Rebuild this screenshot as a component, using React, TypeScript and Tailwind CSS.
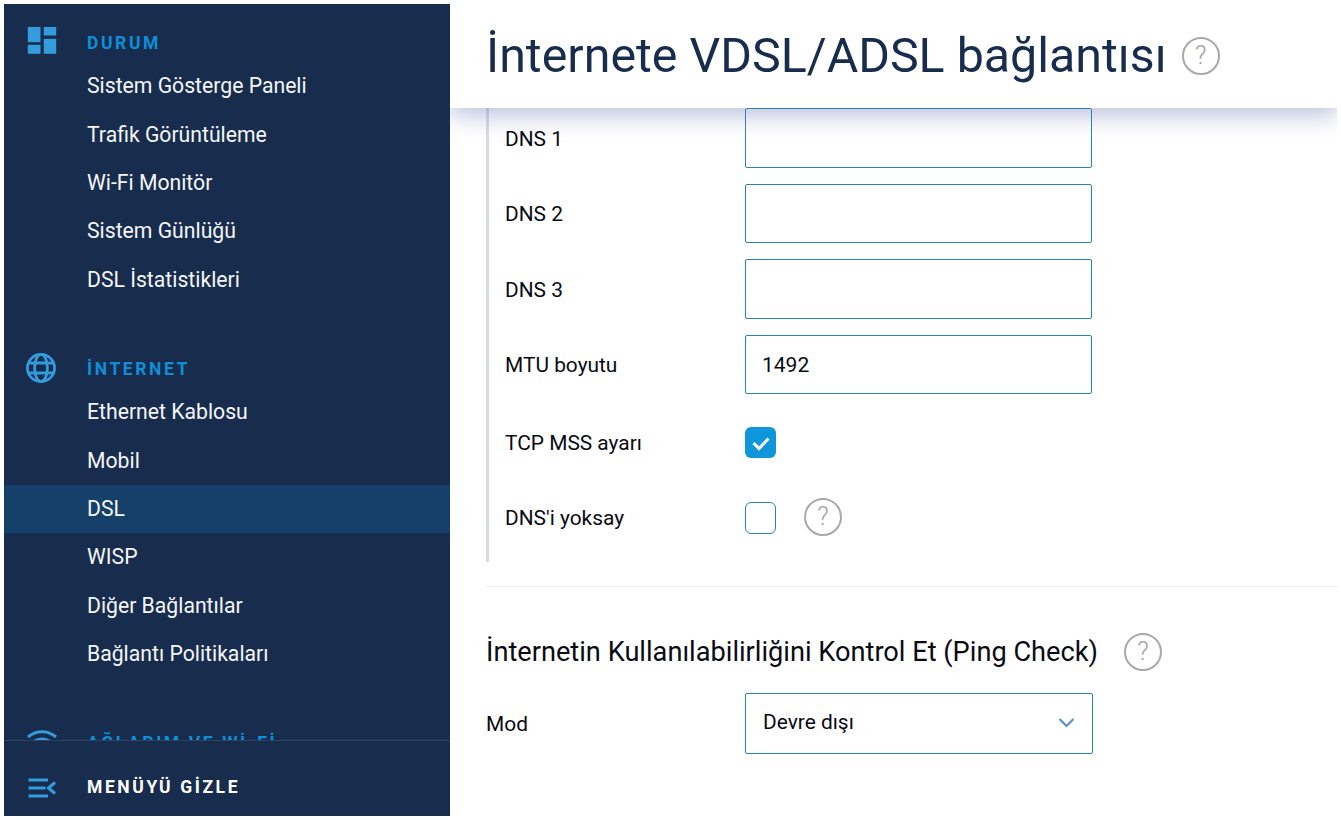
import React from "react";

const sections = [
  { title: "DURUM", icon: "dash", items: ["Sistem Gösterge Paneli", "Trafik Görüntüleme", "Wi-Fi Monitör", "Sistem Günlüğü", "DSL İstatistikleri"] },
  { title: "İNTERNET", icon: "globe", items: ["Ethernet Kablosu", "Mobil", "DSL", "WISP", "Diğer Bağlantılar", "Bağlantı Politikaları"] },
  { title: "AĞLARIM VE Wİ-Fİ", icon: "wifi", items: [] as string[] },
];

function Icon({ name }: { name: string }) {
  if (name === "dash")
    return (
      <svg className="-translate-y-[1.200px]" width="30" height="30" viewBox="0 0 30 30" fill="#349bdc">
        <rect x="0.8" y="0" width="12.7" height="15.400" />
        <rect x="16.8" y="0" width="12.4" height="8.700" />
        <rect x="0.8" y="18" width="12.7" height="9" />
        <rect x="16.8" y="12" width="12.4" height="15" />
      </svg>
    );
  if (name === "globe")
    return (
      <svg className="-translate-x-[1px] -translate-y-[1px]" width="32" height="32" viewBox="0 0 32 32" fill="none" stroke="#349bdc" strokeWidth="2.8">
        <circle cx="16" cy="16" r="13.6" />
        <ellipse cx="16" cy="16" rx="6.4" ry="13.6" />
        <path d="M3.5 11h25M3.5 21h25" />
      </svg>
    );
  return (
    <svg width="32" height="32" viewBox="0 0 32 32" fill="none" stroke="#349bdc" strokeWidth="3">
      <path d="M2 10c8-7 20-7 28 0M7 15c5-4 13-4 18 0M12 20c2-1.500 6-1.500 8 0" />
    </svg>
  );
}

function Help({ className = "" }: { className?: string }) {
  return (
    <span className={"flex h-[38px] w-[38px] shrink-0 items-center justify-center rounded-full border-2 border-[#a9a9a9] text-[25px] font-light text-[#a0a0a0] " + className}>
      ?
    </span>
  );
}

function Field({ label, value = "" }: { label: string; value?: string }) {
  return (
    <div className="flex items-center">
      <div className="w-[240px] shrink-0 pt-[3px] text-[20.900px] text-[#0a0a14]">{label}</div>
      <div className="flex h-[59.500px] w-[347px] items-center rounded-[2px] border border-[#2488ad] pl-[16px] pt-[2px] text-[21px] text-[#0a0a14]">
        {value}
      </div>
    </div>
  );
}

export default function App() {
  return (
    <div className="flex h-[820px] w-[1341px] overflow-hidden bg-white p-1 font-['Roboto',sans-serif]">
      <aside className="flex w-[446px] shrink-0 flex-col bg-[#182c4e]">
        <nav className="min-h-0 flex-1 overflow-hidden pt-[27px]">
          {sections.map((s) => (
            <section key={s.title} className="mb-[53px]">
              <div className="flex h-[24px] items-center">
                <div className="flex w-[83px] pl-[21.500px]">
                  <span className="flex h-[24px] w-[32px] items-center justify-center">
                    <Icon name={s.icon} />
                  </span>
                </div>
                <h2 className="text-[17.500px] font-bold tracking-[2.600px] text-[#0f8fd8]">{s.title}</h2>
              </div>
              <ul className="mt-[7px]">
                {s.items.map((item) => (
                  <li
                    key={item}
                    className={
                      "flex h-[48.400px] items-center pl-[83px] text-[21.200px] text-[#f4f6f8] " +
                      (item === "DSL" ? "bg-[#14406a]" : "")
                    }
                  >
                    {item}
                  </li>
                ))}
              </ul>
            </section>
          ))}
        </nav>
        <footer className="flex h-[76px] shrink-0 items-center border-t border-[#2e4264] bg-[#182c4e] pt-[18px]">
          <div className="flex w-[83px] pl-[23.500px]">
            <svg width="28" height="20" viewBox="0 0 28 20" fill="none" stroke="#349bdc" strokeWidth="3">
              <path d="M0.500 2h19.500M0.500 10h17M0.500 18h19.500M27 4.500l-6.500 5.500 6.500 5.500" />
            </svg>
          </div>
          <span className="text-[17.500px] font-bold tracking-[2.600px] text-white">MENÜYÜ GİZLE</span>
        </footer>
      </aside>

      <main className="flex min-w-0 flex-1 flex-col overflow-hidden">
        <header className="relative z-10 flex h-[104px] shrink-0 items-center bg-white pl-[36px] shadow-[0_6px_24px_rgba(90,105,170,0.45)]">
          <h1 className="text-[48.350px] font-normal leading-none text-[#182c4e]">İnternete VDSL/ADSL bağlantısı</h1>
          <Help className="ml-[15px]" />
        </header>

        <div className="pl-[36px]">
          <div className="flex h-[454px] flex-col border-l-[3px] border-[#d6dbe7] pl-4">
            <div className="flex flex-col gap-[16px]">
              <Field label="DNS 1" />
              <Field label="DNS 2" />
              <Field label="DNS 3" />
              <Field label="MTU boyutu" value="1492" />
            </div>
            <div className="mt-[33px] flex h-[31px] items-center">
              <div className="w-[240px] shrink-0 pt-[2px] text-[20.900px] text-[#0a0a14]">TCP MSS ayarı</div>
              <span className="flex h-[31px] w-[31px] items-center justify-center rounded-[6px] bg-[#0f96da]">
                <svg width="20" height="16" viewBox="0 0 20 16" fill="none" stroke="#fff" strokeWidth="3">
                  <path d="M2.500 8l5.500 5.500 9.500-10" />
                </svg>
              </span>
            </div>
            <div className="mt-[44px] flex h-[31px] items-center">
              <div className="w-[240px] shrink-0 pt-[2px] text-[20.900px] text-[#0a0a14]">DNS'i yoksay</div>
              <span className="h-[32px] w-[31px] rounded-[6px] border border-[#2488ad]" />
              <Help className="ml-[28px] -translate-y-[1px]" />
            </div>
          </div>

          <div className="mt-[24px] h-px bg-[#ececec]" />

          <div className="mt-[46px] flex items-center">
            <h3 className="pt-[2px] text-[27.200px] font-normal leading-none text-[#0a0a14]">
              İnternetin Kullanılabilirliğini Kontrol Et (Ping Check)
            </h3>
            <Help className="ml-[26px]" />
          </div>

          <div className="mt-[22px] flex items-center">
            <div className="w-[259px] shrink-0 pt-[2px] text-[20.900px] text-[#0a0a14]">Mod</div>
            <div className="flex h-[61px] w-[348px] items-center justify-between rounded-[2px] border border-[#2488ad] pb-[2px] pl-[17px] pr-[17px] text-[20.900px] text-[#0a0a14]">
              <span>Devre dışı</span>
              <svg width="17" height="11" viewBox="0 0 17 11" fill="none" stroke="#5b94c8" strokeWidth="2.200">
                <path d="M1.500 2l7 7 7-7" />
              </svg>
            </div>
          </div>
        </div>
      </main>
    </div>
  );
}
